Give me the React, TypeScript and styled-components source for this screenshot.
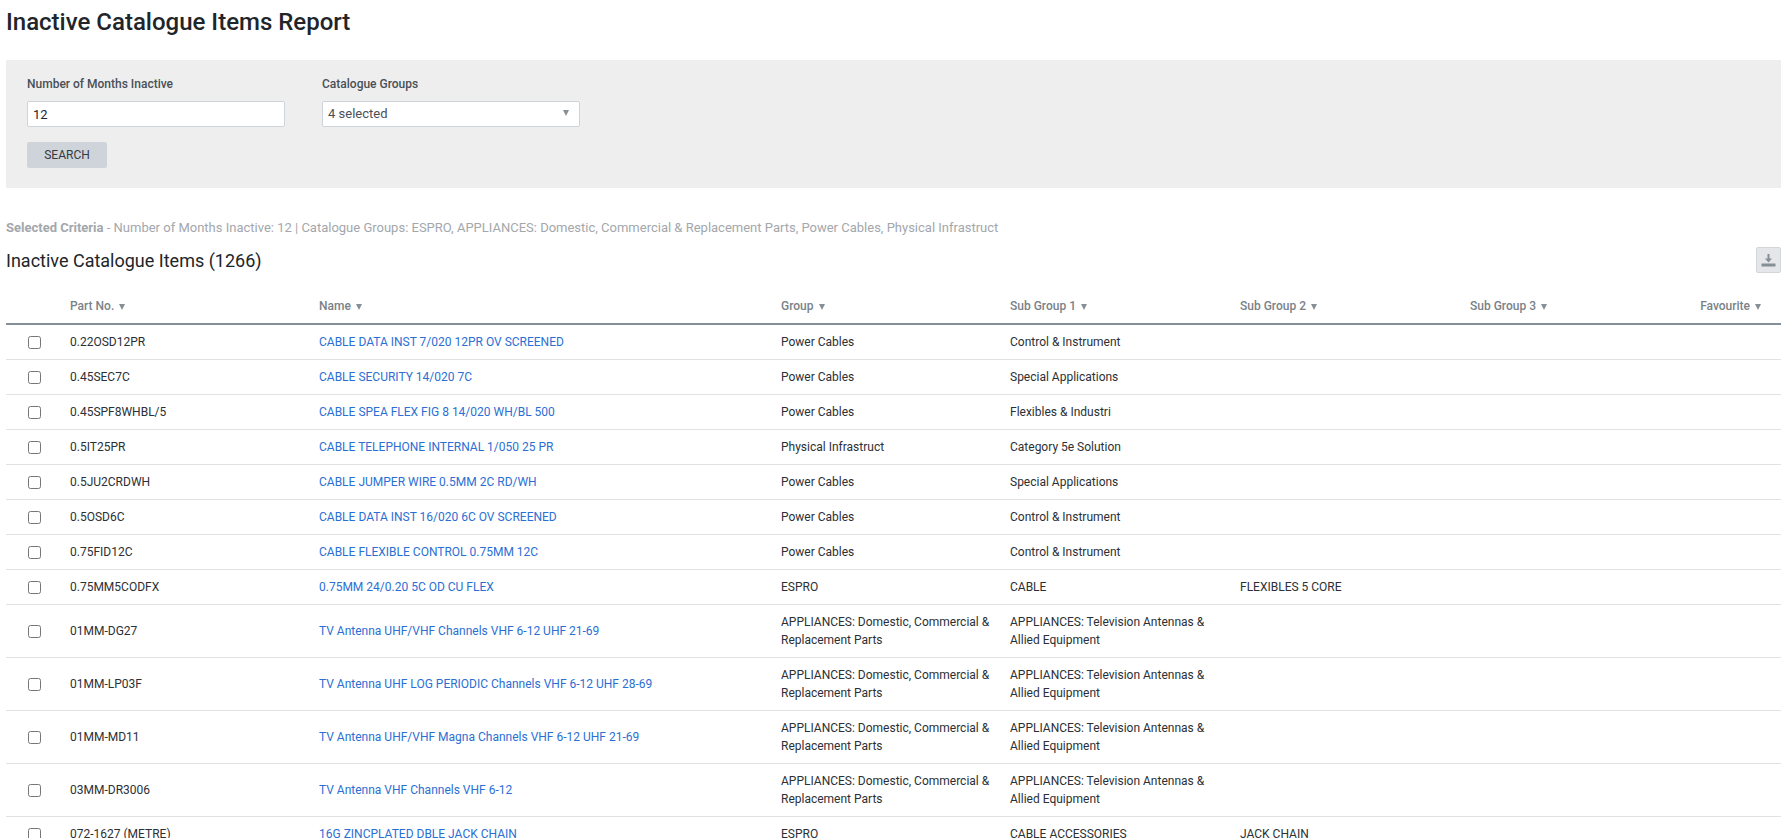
import styled, { createGlobalStyle } from "styled-components";

const GlobalStyle = createGlobalStyle`
  html, body {
    margin: 0;
    height: 838px;
    overflow: hidden;
    background: #fff;
    font-family: Roboto, "Liberation Sans", sans-serif;
    font-size: 12px;
    color: #212529;
  }
`;

const Page = styled.div`
  padding: 0 6px;
`;

const Title = styled.h1`
  margin: 0;
  padding: 7px 0 0;
  height: 60px;
  box-sizing: border-box;
  font-size: 24px;
  line-height: 30px;
  font-weight: 500;
  color: #212529;
`;

const FilterPanel = styled.form`
  background: #eee;
  height: 128px;
  box-sizing: border-box;
  padding: 16px 21px;
`;

const FieldRow = styled.div`
  display: flex;
  gap: 37px;
`;

const Field = styled.div`
  width: 258px;
`;

const Label = styled.label`
  display: block;
  font-weight: 500;
  font-size: 12px;
  line-height: 16px;
  margin-bottom: 9px;
  color: #495057;
`;

const TextInput = styled.input`
  display: block;
  width: 100%;
  height: 26px;
  box-sizing: border-box;
  padding: 0 5px;
  border: 1px solid #ced4da;
  border-radius: 2px;
  background: #fff;
  font: 400 13px Roboto, sans-serif;
  color: #212529;
`;

const SelectBox = styled.div`
  display: flex;
  align-items: center;
  justify-content: space-between;
  height: 26px;
  box-sizing: border-box;
  padding: 0 10px 2px 5px;
  border: 1px solid #ced4da;
  border-radius: 2px;
  background: #fff;
  font-size: 13px;
  color: #495057;
`;

const Caret = styled.span`
  width: 0;
  height: 0;
  border-left: 3.5px solid transparent;
  border-right: 3.5px solid transparent;
  border-top: 6px solid #868e96;
`;

const SearchButton = styled.button`
  display: block;
  width: 80px;
  height: 26px;
  margin-top: 15px;
  padding: 0;
  border: 0;
  border-radius: 2px;
  background: #ced4da;
  font: 400 12px Roboto, sans-serif;
  color: #343a40;
`;

const Criteria = styled.p`
  margin: 32px 0 0;
  font-size: 13px;
  line-height: 16px;
  color: #a3a7ac;

  strong {
    font-weight: 700;
  }
`;

const ResultsBar = styled.div`
  display: flex;
  align-items: center;
  justify-content: space-between;
  height: 26px;
  margin-top: 11px;
`;

const ResultsTitle = styled.h2`
  margin: 0;
  font-size: 18px;
  font-weight: 400;
  color: #212529;
`;

const ExportButton = styled.button`
  display: flex;
  align-items: center;
  justify-content: center;
  width: 25px;
  height: 26px;
  padding: 0;
  border: 1px solid #d3d6d9;
  border-radius: 2px;
  background: #e4e6e9;
  color: #868e96;
`;

const Table = styled.table`
  width: 100%;
  margin-top: 14px;
  border-collapse: collapse;
  table-layout: fixed;
`;

const HeadCell = styled.th<{ $right?: boolean }>`
  height: 37px;
  padding: 1px ${({ $right }) => ($right ? "20px" : "10px")} 0 10px;
  box-sizing: border-box;
  border-bottom: 2px solid #868e96;
  text-align: ${({ $right }) => ($right ? "right" : "left")};
  font-size: 12px;
  font-weight: 500;
  color: #7a8288;
  white-space: nowrap;
`;

const SortArrow = styled.span`
  display: inline-block;
  margin-left: 5px;
  vertical-align: 0;
  border-left: 3.5px solid transparent;
  border-right: 3.5px solid transparent;
  border-top: 6px solid #868e96;
`;

const Cell = styled.td`
  padding: 8px 10px;
  box-sizing: border-box;
  border-bottom: 1px solid #e0e2e4;
  font-size: 12px;
  line-height: 18px;
  color: #2b3035;
  vertical-align: middle;

  a {
    color: #2b6fd4;
    text-decoration: none;
  }
`;

const CheckCell = styled(Cell)`
  padding: 0;
`;

const RowCheck = styled.input`
  display: block;
  width: 13px;
  height: 13px;
  margin: 0 0 0 22px;
`;

type Row = {
  part: string;
  name: string;
  group: string;
  sub1: string;
  sub2?: string;
};

const APPLIANCES = "APPLIANCES: Domestic, Commercial & Replacement Parts";
const TV = "APPLIANCES: Television Antennas & Allied Equipment";

const rows: Row[] = [
  { part: "0.22OSD12PR", name: "CABLE DATA INST 7/020 12PR OV SCREENED", group: "Power Cables", sub1: "Control & Instrument" },
  { part: "0.45SEC7C", name: "CABLE SECURITY 14/020 7C", group: "Power Cables", sub1: "Special Applications" },
  { part: "0.45SPF8WHBL/5", name: "CABLE SPEA FLEX FIG 8 14/020 WH/BL 500", group: "Power Cables", sub1: "Flexibles & Industri" },
  { part: "0.5IT25PR", name: "CABLE TELEPHONE INTERNAL 1/050 25 PR", group: "Physical Infrastruct", sub1: "Category 5e Solution" },
  { part: "0.5JU2CRDWH", name: "CABLE JUMPER WIRE 0.5MM 2C RD/WH", group: "Power Cables", sub1: "Special Applications" },
  { part: "0.5OSD6C", name: "CABLE DATA INST 16/020 6C OV SCREENED", group: "Power Cables", sub1: "Control & Instrument" },
  { part: "0.75FID12C", name: "CABLE FLEXIBLE CONTROL 0.75MM 12C", group: "Power Cables", sub1: "Control & Instrument" },
  { part: "0.75MM5CODFX", name: "0.75MM 24/0.20 5C OD CU FLEX", group: "ESPRO", sub1: "CABLE", sub2: "FLEXIBLES 5 CORE" },
  { part: "01MM-DG27", name: "TV Antenna UHF/VHF Channels VHF 6-12 UHF 21-69", group: APPLIANCES, sub1: TV },
  { part: "01MM-LP03F", name: "TV Antenna UHF LOG PERIODIC Channels VHF 6-12 UHF 28-69", group: APPLIANCES, sub1: TV },
  { part: "01MM-MD11", name: "TV Antenna UHF/VHF Magna Channels VHF 6-12 UHF 21-69", group: APPLIANCES, sub1: TV },
  { part: "03MM-DR3006", name: "TV Antenna VHF Channels VHF 6-12", group: APPLIANCES, sub1: TV },
  { part: "072-1627 (METRE)", name: "16G ZINCPLATED DBLE JACK CHAIN", group: "ESPRO", sub1: "CABLE ACCESSORIES", sub2: "JACK CHAIN" },
];

const columns = [
  { label: "Part No.", width: 249 },
  { label: "Name", width: 462 },
  { label: "Group", width: 229 },
  { label: "Sub Group 1", width: 230 },
  { label: "Sub Group 2", width: 230 },
  { label: "Sub Group 3", width: 230 },
];

const DownloadIcon = () => (
  <svg width="15" height="14" viewBox="0 0 15 14" fill="currentColor">
    <path d="M6.500 1h2v4.500H11L7.500 9.500 4 5.500h2.500z" />
    <rect x="0.500" y="10.500" width="14" height="3" />
  </svg>
);

const App = () => (
  <Page>
    <GlobalStyle />
    <Title>Inactive Catalogue Items Report</Title>
    <FilterPanel>
      <FieldRow>
        <Field>
          <Label>Number of Months Inactive</Label>
          <TextInput defaultValue="12" />
        </Field>
        <Field>
          <Label>Catalogue Groups</Label>
          <SelectBox>
            4 selected
            <Caret />
          </SelectBox>
        </Field>
      </FieldRow>
      <SearchButton type="button">SEARCH</SearchButton>
    </FilterPanel>
    <Criteria>
      <strong>Selected Criteria</strong> - Number of Months Inactive: 12 | Catalogue Groups: ESPRO, APPLIANCES: Domestic,
      Commercial &amp; Replacement Parts, Power Cables, Physical Infrastruct
    </Criteria>
    <ResultsBar>
      <ResultsTitle>Inactive Catalogue Items (1266)</ResultsTitle>
      <ExportButton type="button">
        <DownloadIcon />
      </ExportButton>
    </ResultsBar>
    <Table>
      <colgroup>
        <col style={{ width: 54 }} />
        {columns.map((c) => (
          <col key={c.label} style={{ width: c.width }} />
        ))}
        <col />
      </colgroup>
      <thead>
        <tr>
          <HeadCell />
          {columns.map((c) => (
            <HeadCell key={c.label}>
              {c.label}
              <SortArrow />
            </HeadCell>
          ))}
          <HeadCell $right>
            Favourite
            <SortArrow />
          </HeadCell>
        </tr>
      </thead>
      <tbody>
        {rows.map((row) => (
          <tr key={row.part}>
            <CheckCell>
              <RowCheck type="checkbox" />
            </CheckCell>
            <Cell>{row.part}</Cell>
            <Cell>
              <a href="#">{row.name}</a>
            </Cell>
            <Cell>{row.group}</Cell>
            <Cell>{row.sub1}</Cell>
            <Cell>{row.sub2}</Cell>
            <Cell />
            <Cell />
          </tr>
        ))}
      </tbody>
    </Table>
  </Page>
);

export default App;
